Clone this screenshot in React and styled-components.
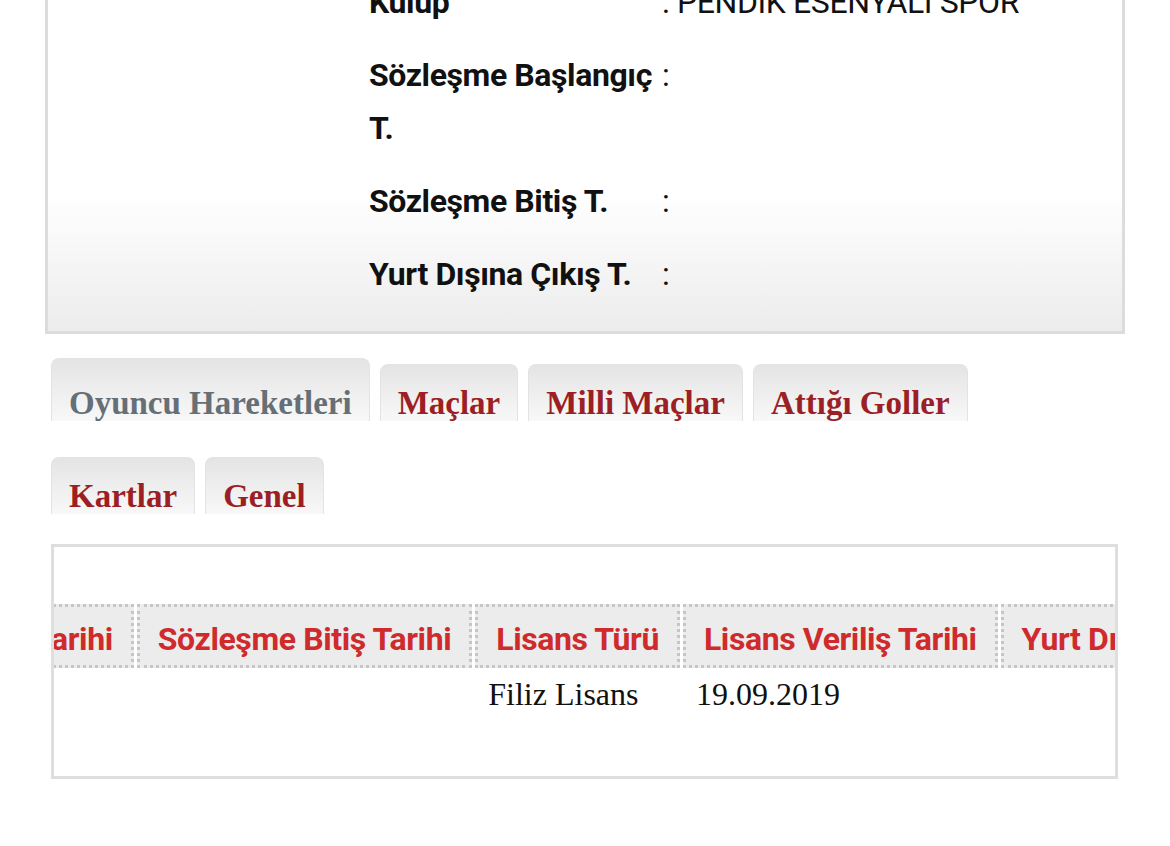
import React, { useLayoutEffect, useRef } from 'react';
import styled, { createGlobalStyle } from 'styled-components';

const GlobalStyle = createGlobalStyle`
  html, body {
    margin: 0;
    padding: 0;
    background: #fff;
  }
  body {
    font-family: Roboto, "Noto Sans", sans-serif;
    overflow: hidden;
  }
`;

// the page is shown scrolled a little, so the first info row is cut at the top
const Page = styled.div`
  width: 1170px;
  box-sizing: border-box;
  padding: 0 45px;
  margin-top: -57px;
`;

const InfoPanel = styled.section`
  display: flex;
  border: 3px solid #dcdcdc;
  padding: 20px 0;
  background: linear-gradient(to bottom, #fff 0%, #fff 64%, #ececec 100%);
`;

const PhotoColumn = styled.div`
  width: 321px;
  flex-shrink: 0;
`;

const InfoTable = styled.table`
  border-collapse: collapse;
  font-family: Roboto, "Noto Sans", sans-serif;
  font-size: 32px;
  line-height: 53px;
  letter-spacing: -0.4px;
  color: #111;
`;

const Label = styled.th`
  width: 289px;
  padding: 10px 4px 10px 0;
  text-align: left;
  vertical-align: top;
  font-weight: 700;
`;

const Value = styled.td`
  padding: 10px 0;
  vertical-align: top;
  font-weight: 400;
  white-space: nowrap;
`;

const TabBar = styled.nav`
  display: flex;
  flex-wrap: wrap;
  align-items: flex-end;
  column-gap: 10px;
  row-gap: 36px;
  max-width: 1000px;
  margin: 24px 7px 0 6px;
`;

const Tab = styled.a`
  display: flex;
  align-items: flex-end;
  box-sizing: border-box;
  height: ${(p) => (p.$active ? 63 : 57)}px;
  padding: 0 17px 2px;
  border: 1px solid #e3e3e3;
  border-bottom: none;
  border-radius: 8px 8px 0 0;
  background: linear-gradient(to bottom, #e4e4e4 0%, #efefef 55%, #f8f8f8 100%);
  font-family: "Liberation Serif", "Times New Roman", serif;
  font-weight: 700;
  font-size: 33px;
  line-height: 32px;
  color: ${(p) => (p.$active ? '#656f76' : '#9b1f24')};
  text-decoration: none;
  white-space: nowrap;
  cursor: pointer;
`;

const ResultsPanel = styled.section`
  margin: 30px 7px 0 6px;
  border: 3px solid #dedede;
  padding: 54px 0 53px;
`;

const Scroller = styled.div`
  overflow-x: auto;
  scrollbar-width: none;
  &::-webkit-scrollbar {
    display: none;
  }
`;

const Grid = styled.table`
  border-collapse: separate;
  border-spacing: 3px;
  white-space: nowrap;
`;

const HeadCell = styled.th`
  padding: 7px 18px 1px;
  border: 3px dotted #c6c6c6;
  background: #ececec;
  font-family: Roboto, "Noto Sans", sans-serif;
  font-weight: 700;
  font-size: 32px;
  line-height: 50px;
  letter-spacing: -0.4px;
  color: #cf2a2c;
  text-align: left;
`;

const Cell = styled.td`
  padding: 5px 13px 7px;
  font-family: "Liberation Serif", "Times New Roman", serif;
  font-size: 32px;
  color: #111;
  text-align: left;
`;

const info = [
  ['Kulüp', ': PENDİK ESENYALI SPOR'],
  ['Sözleşme Başlangıç T.', ':'],
  ['Sözleşme Bitiş T.', ':'],
  ['Yurt Dışına Çıkış T.', ':'],
];

const tabs = [
  ['Oyuncu Hareketleri', true],
  ['Maçlar'],
  ['Milli Maçlar'],
  ['Attığı Goller'],
  ['Kartlar'],
  ['Genel'],
];

const columns = [
  'Sezon',
  'Kulüp',
  'Sözleşme Başlangıç Tarihi',
  'Sözleşme Bitiş Tarihi',
  'Lisans Türü',
  'Lisans Veriliş Tarihi',
  'Yurt Dışına Çıkış Tarihi',
];

const row = ['', '', '', '', 'Filiz Lisans', '19.09.2019', ''];

const App = () => {
  const scrollerRef = useRef(null);
  const anchorRef = useRef(null);

  // keep the table scrolled so that "Sözleşme Bitiş Tarihi" starts just right of the edge
  useLayoutEffect(() => {
    const box = scrollerRef.current;
    const cell = anchorRef.current;
    if (!box || !cell) return;
    const offset = cell.getBoundingClientRect().left - box.getBoundingClientRect().left;
    box.scrollLeft = offset - 83;
  }, []);

  return (
    <>
      <GlobalStyle />
      <Page>
        <InfoPanel>
          <PhotoColumn />
          <InfoTable>
            <tbody>
              {info.map(([label, value]) => (
                <tr key={label}>
                  <Label>{label}</Label>
                  <Value>{value}</Value>
                </tr>
              ))}
            </tbody>
          </InfoTable>
        </InfoPanel>

        <TabBar>
          {tabs.map(([name, active]) => (
            <Tab key={name} $active={active}>
              {name}
            </Tab>
          ))}
        </TabBar>

        <ResultsPanel>
          <Scroller ref={scrollerRef}>
            <Grid>
              <thead>
                <tr>
                  {columns.map((c, i) => (
                    <HeadCell key={c} ref={i === 3 ? anchorRef : undefined}>
                      {c}
                    </HeadCell>
                  ))}
                </tr>
              </thead>
              <tbody>
                <tr>
                  {row.map((v, i) => (
                    <Cell key={i}>{v}</Cell>
                  ))}
                </tr>
              </tbody>
            </Grid>
          </Scroller>
        </ResultsPanel>
      </Page>
    </>
  );
};

export default App;
